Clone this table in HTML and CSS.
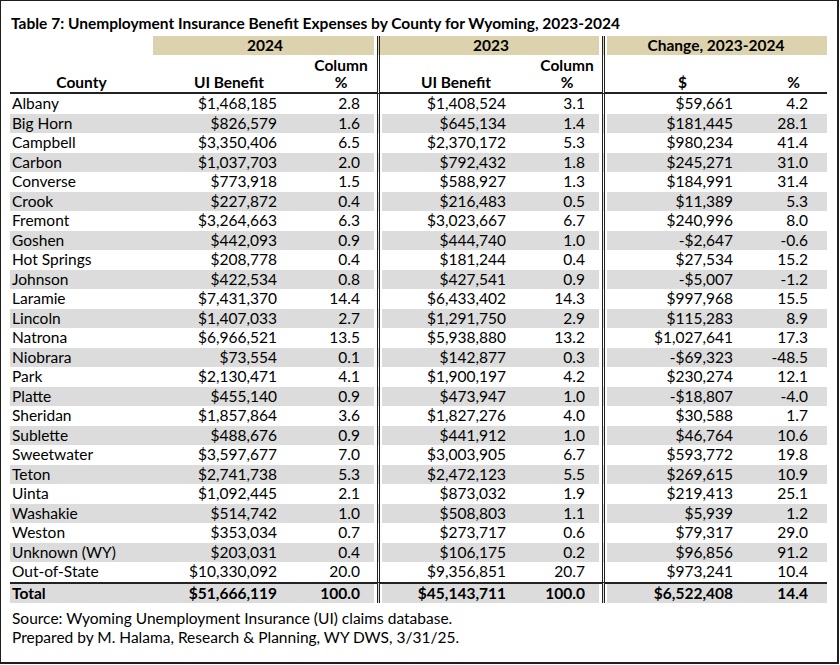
FILE: index.html
```html
<!DOCTYPE html>
<html lang="en">
<head>
<meta charset="utf-8">
<title>Table 7: Unemployment Insurance Benefit Expenses by County for Wyoming, 2023-2024</title>
<link rel="stylesheet" href="styles.css">
</head>
<body>
<div class="frame">
  <h1 class="title">Table 7: Unemployment Insurance Benefit Expenses by County for Wyoming, 2023-2024</h1>
  <table class="ui-table">
    <colgroup>
      <col class="c-county"><col class="c-ben"><col class="c-pct"><col class="c-ben2"><col class="c-pct2"><col class="c-chg"><col class="c-chgpct">
    </colgroup>
    <thead>
      <tr class="band">
        <th class="blank"></th>
        <th colspan="2" class="year pre">2024</th>
        <th colspan="2" class="year sep pre">2023</th>
        <th colspan="2" class="year sep">Change, 2023-2024</th>
      </tr>
      <tr class="sub">
        <th class="county-h">County</th>
        <th>UI Benefit</th>
        <th class="pre">Column<br>%</th>
        <th class="sep">UI Benefit</th>
        <th class="pre">Column<br>%</th>
        <th class="sep">$</th>
        <th>%</th>
      </tr>
    </thead>
    <tbody>
      <tr><td>Albany</td><td class="n b1">$1,468,185</td><td class="n p1 pre">2.8</td><td class="n b2 sep">$1,408,524</td><td class="n p2 pre">3.1</td><td class="n c1 sep">$59,661</td><td class="n c2">4.2</td></tr>
      <tr><td>Big Horn</td><td class="n b1">$826,579</td><td class="n p1 pre">1.6</td><td class="n b2 sep">$645,134</td><td class="n p2 pre">1.4</td><td class="n c1 sep">$181,445</td><td class="n c2">28.1</td></tr>
      <tr><td>Campbell</td><td class="n b1">$3,350,406</td><td class="n p1 pre">6.5</td><td class="n b2 sep">$2,370,172</td><td class="n p2 pre">5.3</td><td class="n c1 sep">$980,234</td><td class="n c2">41.4</td></tr>
      <tr><td>Carbon</td><td class="n b1">$1,037,703</td><td class="n p1 pre">2.0</td><td class="n b2 sep">$792,432</td><td class="n p2 pre">1.8</td><td class="n c1 sep">$245,271</td><td class="n c2">31.0</td></tr>
      <tr><td>Converse</td><td class="n b1">$773,918</td><td class="n p1 pre">1.5</td><td class="n b2 sep">$588,927</td><td class="n p2 pre">1.3</td><td class="n c1 sep">$184,991</td><td class="n c2">31.4</td></tr>
      <tr><td>Crook</td><td class="n b1">$227,872</td><td class="n p1 pre">0.4</td><td class="n b2 sep">$216,483</td><td class="n p2 pre">0.5</td><td class="n c1 sep">$11,389</td><td class="n c2">5.3</td></tr>
      <tr><td>Fremont</td><td class="n b1">$3,264,663</td><td class="n p1 pre">6.3</td><td class="n b2 sep">$3,023,667</td><td class="n p2 pre">6.7</td><td class="n c1 sep">$240,996</td><td class="n c2">8.0</td></tr>
      <tr><td>Goshen</td><td class="n b1">$442,093</td><td class="n p1 pre">0.9</td><td class="n b2 sep">$444,740</td><td class="n p2 pre">1.0</td><td class="n c1 sep">-$2,647</td><td class="n c2">-0.6</td></tr>
      <tr><td>Hot Springs</td><td class="n b1">$208,778</td><td class="n p1 pre">0.4</td><td class="n b2 sep">$181,244</td><td class="n p2 pre">0.4</td><td class="n c1 sep">$27,534</td><td class="n c2">15.2</td></tr>
      <tr><td>Johnson</td><td class="n b1">$422,534</td><td class="n p1 pre">0.8</td><td class="n b2 sep">$427,541</td><td class="n p2 pre">0.9</td><td class="n c1 sep">-$5,007</td><td class="n c2">-1.2</td></tr>
      <tr><td>Laramie</td><td class="n b1">$7,431,370</td><td class="n p1 pre">14.4</td><td class="n b2 sep">$6,433,402</td><td class="n p2 pre">14.3</td><td class="n c1 sep">$997,968</td><td class="n c2">15.5</td></tr>
      <tr><td>Lincoln</td><td class="n b1">$1,407,033</td><td class="n p1 pre">2.7</td><td class="n b2 sep">$1,291,750</td><td class="n p2 pre">2.9</td><td class="n c1 sep">$115,283</td><td class="n c2">8.9</td></tr>
      <tr><td>Natrona</td><td class="n b1">$6,966,521</td><td class="n p1 pre">13.5</td><td class="n b2 sep">$5,938,880</td><td class="n p2 pre">13.2</td><td class="n c1 sep">$1,027,641</td><td class="n c2">17.3</td></tr>
      <tr><td>Niobrara</td><td class="n b1">$73,554</td><td class="n p1 pre">0.1</td><td class="n b2 sep">$142,877</td><td class="n p2 pre">0.3</td><td class="n c1 sep">-$69,323</td><td class="n c2">-48.5</td></tr>
      <tr><td>Park</td><td class="n b1">$2,130,471</td><td class="n p1 pre">4.1</td><td class="n b2 sep">$1,900,197</td><td class="n p2 pre">4.2</td><td class="n c1 sep">$230,274</td><td class="n c2">12.1</td></tr>
      <tr><td>Platte</td><td class="n b1">$455,140</td><td class="n p1 pre">0.9</td><td class="n b2 sep">$473,947</td><td class="n p2 pre">1.0</td><td class="n c1 sep">-$18,807</td><td class="n c2">-4.0</td></tr>
      <tr><td>Sheridan</td><td class="n b1">$1,857,864</td><td class="n p1 pre">3.6</td><td class="n b2 sep">$1,827,276</td><td class="n p2 pre">4.0</td><td class="n c1 sep">$30,588</td><td class="n c2">1.7</td></tr>
      <tr><td>Sublette</td><td class="n b1">$488,676</td><td class="n p1 pre">0.9</td><td class="n b2 sep">$441,912</td><td class="n p2 pre">1.0</td><td class="n c1 sep">$46,764</td><td class="n c2">10.6</td></tr>
      <tr><td>Sweetwater</td><td class="n b1">$3,597,677</td><td class="n p1 pre">7.0</td><td class="n b2 sep">$3,003,905</td><td class="n p2 pre">6.7</td><td class="n c1 sep">$593,772</td><td class="n c2">19.8</td></tr>
      <tr><td>Teton</td><td class="n b1">$2,741,738</td><td class="n p1 pre">5.3</td><td class="n b2 sep">$2,472,123</td><td class="n p2 pre">5.5</td><td class="n c1 sep">$269,615</td><td class="n c2">10.9</td></tr>
      <tr><td>Uinta</td><td class="n b1">$1,092,445</td><td class="n p1 pre">2.1</td><td class="n b2 sep">$873,032</td><td class="n p2 pre">1.9</td><td class="n c1 sep">$219,413</td><td class="n c2">25.1</td></tr>
      <tr><td>Washakie</td><td class="n b1">$514,742</td><td class="n p1 pre">1.0</td><td class="n b2 sep">$508,803</td><td class="n p2 pre">1.1</td><td class="n c1 sep">$5,939</td><td class="n c2">1.2</td></tr>
      <tr><td>Weston</td><td class="n b1">$353,034</td><td class="n p1 pre">0.7</td><td class="n b2 sep">$273,717</td><td class="n p2 pre">0.6</td><td class="n c1 sep">$79,317</td><td class="n c2">29.0</td></tr>
      <tr><td>Unknown (WY)</td><td class="n b1">$203,031</td><td class="n p1 pre">0.4</td><td class="n b2 sep">$106,175</td><td class="n p2 pre">0.2</td><td class="n c1 sep">$96,856</td><td class="n c2">91.2</td></tr>
      <tr><td>Out-of-State</td><td class="n b1">$10,330,092</td><td class="n p1 pre">20.0</td><td class="n b2 sep">$9,356,851</td><td class="n p2 pre">20.7</td><td class="n c1 sep">$973,241</td><td class="n c2">10.4</td></tr>
    </tbody>
    <tfoot>
      <tr class="total"><td>Total</td><td class="n b1">$51,666,119</td><td class="n p1 pre">100.0</td><td class="n b2 sep">$45,143,711</td><td class="n p2 pre">100.0</td><td class="n c1 sep">$6,522,408</td><td class="n c2">14.4</td></tr>
    </tfoot>
  </table>
  <p class="note">Source: Wyoming Unemployment Insurance (UI) claims database.<br>Prepared by M. Halama, Research &amp; Planning, WY DWS, 3/31/25.</p>
</div>
</body>
</html>
```

FILE: styles.css
```css
html, body {
  margin: 0;
  padding: 0;
  background: #fff;
}

.frame {
  box-sizing: border-box;
  width: 839px;
  height: 664px;
  border: 1px solid #1e1e1e;
  border-right-width: 2px;
  border-bottom-width: 2px;
  padding: 10px 10px 0 9px;
  font-family: Lato, "Liberation Sans", sans-serif;
  font-size: 15.5px;
  color: #000;
}

.title {
  margin: 0 0 0 1px;
  font-size: 15.5px;
  font-weight: bold;
  line-height: 25px;
  height: 25px;
}

.ui-table {
  table-layout: fixed;
  border-collapse: separate;
  border-spacing: 0;
  width: 817px;
}

.c-county { width: 143px; }
.c-ben { width: 152px; }
.c-pct { width: 72px; }
.c-ben2 { width: 155px; }
.c-pct2 { width: 70px; }
.c-chg { width: 158px; }
.c-chgpct { width: 67px; }

.ui-table th,
.ui-table td {
  padding: 0 2px;
  white-space: nowrap;
}

.band th {
  height: 19px;
  line-height: 19px;
  font-weight: bold;
  text-align: center;
}

.band .year {
  background: #ddd2ae;
}

.band .blank {
  background: transparent;
}

.sub th {
  height: 36px;
  line-height: 17px;
  vertical-align: bottom;
  text-align: center;
  font-weight: bold;
  border-bottom: 2px solid #222;
  padding-bottom: 1px;
}

.ui-table td {
  height: 19.5px;
  line-height: 19px;
  padding-top: 0;
  padding-bottom: 0;
}

.ui-table tbody tr:nth-child(even) td,
.total td {
  background: #dcdcdc;
}

.ui-table .n {
  text-align: right;
}

.b1 { padding-right: 28px !important; }
.p1 { padding-right: 17px !important; }
.b2 { padding-right: 26px !important; }
.p2 { padding-right: 17px !important; }
.c1 { padding-right: 27px !important; }
.c2 { padding-right: 19px !important; }

.sep {
  border-left: 3px double #222;
  box-shadow: inset 2px 0 0 #fff;
}

.pre {
  box-shadow: inset -3px 0 0 #fff;
}

.total td {
  font-weight: bold;
  border-top: 2px solid #222;
  height: 19px;
}

.note {
  margin: 6px 0 0 2px;
  line-height: 19px;
}
```
